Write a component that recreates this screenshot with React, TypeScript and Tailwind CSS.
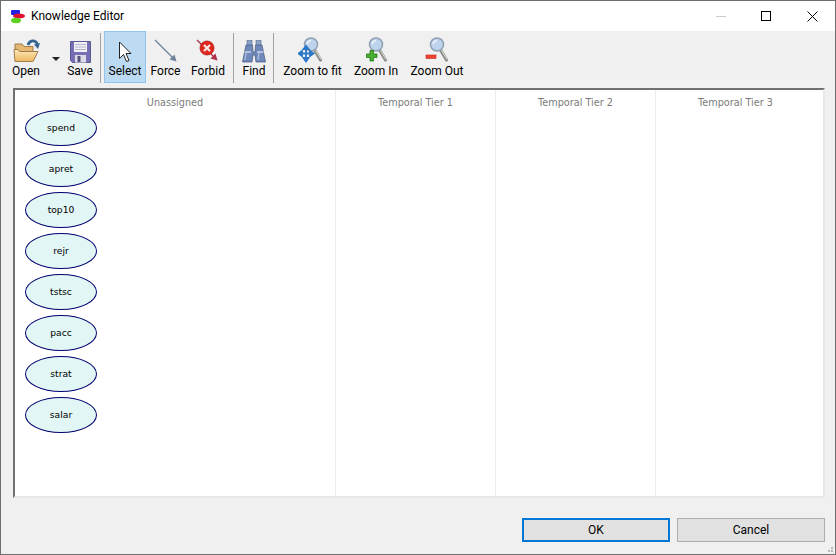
import type { ReactNode } from "react";

const NODES = ["spend", "apret", "top10", "rejr", "tstsc", "pacc", "strat", "salar"];

function AppLogo() {
   return (
      <svg width="16" height="16" viewBox="0 0 16 16">
         <rect x="1" y="2" width="9" height="5" rx="1" fill="#2020e0" />
         <ellipse cx="9" cy="8" rx="6" ry="2.6" fill="#e01030" />
         <ellipse cx="6" cy="12.5" rx="5" ry="2.8" fill="#60d020" />
      </svg>
   );
}

function OpenIcon() {
   return (
      <svg width="27" height="24" viewBox="0 0 27 24">
         <defs>
            <linearGradient id="folderFront" x1="0" y1="0" x2="0" y2="1">
               <stop offset="0" stopColor="#fde9b8" />
               <stop offset="1" stopColor="#eeb860" />
            </linearGradient>
         </defs>
         <path d="M15 6 C16.500 1 22 0.500 24.500 5" fill="none" stroke="#34648f" strokeWidth="2.800" />
         <path d="M21 5.500 L27 4 L25 10 Z" fill="#34648f" />
         <path d="M2 5 H9 L11 7.500 H20 V13 H2 Z" fill="#e6b872" stroke="#a07c48" strokeWidth="1" />
         <path d="M2 22.500 L1 10.500 H5 L6.500 12.500 H25 L20 22.500 Z" fill="url(#folderFront)" stroke="#a07c48" strokeWidth="1" />
      </svg>
   );
}

function SaveIcon() {
   return (
      <svg width="21" height="22" viewBox="0 0 21 22">
         <path d="M0.500 0.500 H20.500 V21.500 H2.500 L0.500 19.500 Z" fill="#7570b4" stroke="#5c5894" />
         <rect x="4" y="1" width="13" height="10" fill="#f2f2f6" />
         <path d="M5 3.500 H16 M5 6 H16 M5 8.500 H16" stroke="#b4b4cc" strokeWidth="1" />
         <rect x="5" y="14" width="11" height="7.500" fill="#dcdce8" />
         <rect x="7.500" y="15" width="3" height="6" fill="#55527e" />
      </svg>
   );
}

function CursorIcon() {
   return (
      <svg width="14" height="22" viewBox="0 0 14 22">
         <path d="M1.500 1 V17.500 L5.500 13.500 L8.500 20.500 L11 19.500 L8 12.500 H13 Z" fill="#fff" stroke="#222" strokeWidth="1" strokeLinejoin="miter" />
      </svg>
   );
}

function ForceIcon() {
   return (
      <svg width="24" height="24" viewBox="0 0 24 24">
         <path d="M1 1 L20 20" stroke="#6f8299" strokeWidth="1.300" />
         <path d="M22.500 22.500 L15.500 20.500 L20.500 15.500 Z" fill="#6f8299" />
      </svg>
   );
}

function ForbidIcon() {
   return (
      <svg width="24" height="24" viewBox="0 0 24 24">
         <path d="M1 1 L19 19" stroke="#b03048" strokeWidth="1.300" />
         <path d="M21.500 21.500 L14.500 19.500 L19.500 14.500 Z" fill="#b03048" />
         <circle cx="11" cy="9" r="7" fill="#e02820" stroke="#b01810" strokeWidth="0.800" />
         <path d="M8 6 L14 12 M14 6 L8 12" stroke="#fbe8e4" strokeWidth="2.200" />
      </svg>
   );
}

function FindIcon() {
   return (
      <svg width="24" height="23" viewBox="0 0 24 23">
         <rect x="5" y="0.500" width="5" height="5" fill="#8aa2c8" stroke="#56698c" strokeWidth="0.600" />
         <rect x="14" y="0.500" width="5" height="5" fill="#8aa2c8" stroke="#56698c" strokeWidth="0.600" />
         <path d="M4 5 H10.500 L11 12 H13 L13.500 5 H20 L23.500 22 H14 L13 15 H11 L10 22 H0.500 Z" fill="#7089bb" stroke="#43557a" strokeWidth="0.700" />
         <path d="M2.500 12 H9 M15 12 H21.500" stroke="#c8d4ea" strokeWidth="1.500" />
         <path d="M3 20 L4 13 M16 20 L17 13" stroke="#a9bbdc" strokeWidth="1.500" />
      </svg>
   );
}

function Lens({ children, className }: { children?: ReactNode; className?: string }) {
   return (
      <svg className={className} width="26" height="26" viewBox="0 0 26 26">
         <path d="M16.500 13 L22.500 23" stroke="#8d8d88" strokeWidth="3.200" strokeLinecap="round" />
         <path d="M17.500 13.500 L23 22.500" stroke="#dcdcd6" strokeWidth="1" />
         <circle cx="13" cy="7.500" r="6.500" fill="#bed3ec" stroke="#8fa0b4" strokeWidth="1.500" />
         <path d="M9 7 A4.500 4.500 0 0 1 13 3.500" fill="none" stroke="#eef5fd" strokeWidth="1.500" />
         {children}
      </svg>
   );
}

function ToolButton({
   icon,
   label,
   active,
   className,
}: {
   icon: ReactNode;
   label: string;
   active?: boolean;
   className: string;
}) {
   return (
      <div
         className={`flex h-[52px] shrink-0 flex-col items-center border ${active ? "border-[#90c4ec] bg-[#bcdaf2]" : "border-transparent"} ${className}`}
      >
         <div className="flex h-[31px] items-end justify-center">{icon}</div>
         <span className="whitespace-nowrap text-[12px] leading-[16px] text-black">{label}</span>
      </div>
   );
}

function Separator({ className }: { className: string }) {
   return <div className={`h-[50px] w-px shrink-0 bg-[#a0a0a0] ${className}`} />;
}

function Column({ label, className, children }: { label: string; className: string; children?: ReactNode }) {
   return (
      <div className={`h-full shrink-0 ${className}`}>
         <div className="pt-[7px] text-center font-['DejaVu_Sans',sans-serif] text-[9.7px] leading-[12px] text-[#7b7b7b]">
            {label}
         </div>
         {children}
      </div>
   );
}

export default function App() {
   return (
      <div className="flex h-[555px] w-[836px] flex-col overflow-hidden border border-[#6e6e6e] bg-[#f0f0f0] font-['Roboto',sans-serif]">
         <div className="flex h-[30px] shrink-0 items-center bg-white pl-[9px] text-[12px] text-black">
            <AppLogo />
            <span className="ml-[5px]">Knowledge Editor</span>
            <div className="ml-auto flex items-center">
               <div className="mr-[35px] h-px w-[10px] bg-[#cccccc]" />
               <div className="mr-[36px] size-[10px] border border-black" />
               <svg className="mr-[17px]" width="11" height="11" viewBox="0 0 11 11">
                  <path d="M0.500 0.500 L10.500 10.500 M10.500 0.500 L0.500 10.500" stroke="#000" strokeWidth="1" />
               </svg>
            </div>
         </div>

         <div className="flex h-[57px] shrink-0 items-start pl-[11px]">
            <ToolButton className="w-[28px]" icon={<OpenIcon />} label="Open" />
            <svg className="ml-[12px] mr-[6px] mt-[26px]" width="8" height="4" viewBox="0 0 8 4">
               <path d="M0 0 H8 L4 4 Z" fill="#222" />
            </svg>
            <ToolButton className="w-[28px]" icon={<SaveIcon />} label="Save" />
            <Separator className="ml-[6px] mr-[3px] mt-[2px]" />
            <ToolButton active className="w-[42px]" icon={<CursorIcon />} label="Select" />
            <ToolButton className="ml-[4px] w-[31px]" icon={<ForceIcon />} label="Force" />
            <ToolButton className="ml-[9px] w-[36px]" icon={<ForbidIcon />} label="Forbid" />
            <Separator className="ml-[7px] mr-[8px] mt-[2px]" />
            <ToolButton className="w-[24px]" icon={<FindIcon />} label="Find" />
            <Separator className="ml-[7px] mr-[8px] mt-[2px]" />
            <ToolButton
               className="w-[61px]"
               icon={
                  <Lens className="mr-[4px]">
                     <path d="M8 10 V23 M2 16.500 H14 M8 9 L5.500 12 H10.500 Z M8 24.500 L5.500 21 H10.500 Z M0.500 16.500 L4 14 V19 Z M15.500 16.500 L12 14 V19 Z" stroke="#2a78c8" strokeWidth="1.800" fill="#2a78c8" />
                  </Lens>
               }
               label="Zoom to fit"
            />
            <ToolButton
               className="ml-[10px] w-[46px]"
               icon={
                  <Lens>
                     <path d="M3.500 17 H7 V13.500 H10.500 V17 H14 V20.500 H10.500 V24 H7 V20.500 H3.500 Z" fill="#48b030" stroke="#1f7a18" strokeWidth="0.800" />
                  </Lens>
               }
               label="Zoom In"
            />
            <ToolButton
               className="ml-[10px] w-[56px]"
               icon={
                  <Lens>
                     <rect x="2" y="18" width="10" height="3.500" fill="#f04030" stroke="#c02820" strokeWidth="0.600" />
                  </Lens>
               }
               label="Zoom Out"
            />
         </div>

         <div className="ml-[12px] mr-[10px] flex h-[410px] shrink-0 border-2 border-[#e8e8e8] border-l-[#707070] border-t-[#707070] bg-white">
            <Column className="w-[321px] border-r border-[#ececec]" label="Unassigned">
               <div className="mt-[1px] flex flex-col gap-[5px] pl-[10px]">
                  {NODES.map((node) => (
                     <div
                        className="flex h-[36px] w-[72px] items-center justify-center rounded-[50%] border border-[#00006e] bg-[#e2f6f6] font-['DejaVu_Sans',sans-serif] text-[9.200px] text-black"
                        key={node}
                     >
                        {node}
                     </div>
                  ))}
               </div>
            </Column>
            <Column className="w-[160px] border-r border-[#ececec]" label="Temporal Tier 1" />
            <Column className="w-[160px] border-r border-[#ececec]" label="Temporal Tier 2" />
            <Column className="flex-1 pr-[8px]" label="Temporal Tier 3" />
         </div>

         <div className="relative flex flex-1 justify-end gap-[7px] pr-[10px] pt-[20px] text-[12px] text-black">
            <button className="h-[24px] w-[148px] border-2 border-[#0078d7] bg-[#e1e1e1]" type="button">
               OK
            </button>
            <button className="h-[24px] w-[148px] border border-[#adadad] bg-[#e1e1e1]" type="button">
               Cancel
            </button>
            <div className="absolute bottom-[2px] right-[2px] grid grid-cols-3 gap-px">
               <span />
               <span />
               <span className="size-[2px] bg-[#b8b8b8]" />
               <span />
               <span className="size-[2px] bg-[#b8b8b8]" />
               <span className="size-[2px] bg-[#b8b8b8]" />
            </div>
         </div>
      </div>
   );
}
